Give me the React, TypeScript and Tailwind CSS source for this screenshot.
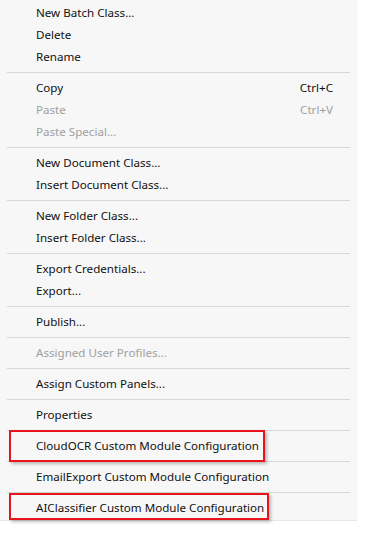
type Item = {
  label: string;
  shortcut?: string;
  disabled?: boolean;
  mark?: "ocr" | "ai";
};

const groups: Item[][] = [
  [{ label: "New Batch Class..." }, { label: "Delete" }, { label: "Rename" }],
  [
    { label: "Copy", shortcut: "Ctrl+C" },
    { label: "Paste", shortcut: "Ctrl+V", disabled: true },
    { label: "Paste Special...", disabled: true },
  ],
  [{ label: "New Document Class..." }, { label: "Insert Document Class..." }],
  [{ label: "New Folder Class..." }, { label: "Insert Folder Class..." }],
  [{ label: "Export Credentials..." }, { label: "Export..." }],
  [{ label: "Publish..." }],
  [{ label: "Assigned User Profiles...", disabled: true }],
  [{ label: "Assign Custom Panels..." }],
  [{ label: "Properties" }],
  [{ label: "CloudOCR Custom Module Configuration", mark: "ocr" }],
  [{ label: "EmailExport Custom Module Configuration" }],
  [{ label: "AIClassifier Custom Module Configuration", mark: "ai" }],
];

function MenuRow({ item }: { item: Item }) {
  return (
    <div
      className={`relative h-[22px] flex items-center pl-[36px] pr-[24px] ${
        item.disabled ? "text-[#a0a0a0]" : "text-[#111]"
      }`}
    >
      <span className="flex-1 leading-none pb-[1px]">{item.label}</span>
      {item.shortcut && <span className="leading-none pb-[1px]">{item.shortcut}</span>}
      {item.mark === "ocr" && (
        <div className="absolute left-[9px] top-[-5px] w-[256px] h-[32px] border-2 border-[#e8141c] shadow-[2px_2px_3px_rgba(0,0,0,0.25)]" />
      )}
      {item.mark === "ai" && (
        <div className="absolute left-[9px] top-[-4px] w-[260px] h-[27px] border-2 border-[#e8141c] shadow-[2px_2px_3px_rgba(0,0,0,0.25)]" />
      )}
    </div>
  );
}

export default function App() {
  return (
    <div className="w-[375px] h-[551px] bg-white">
      <div
        className="w-[357px] bg-[#f7f7f7] pt-[2px] pb-[1px] border-b border-[#e6e6e6] text-[11.6px]"
        style={{ fontFamily: '"Segoe UI", "Noto Sans", sans-serif' }}
      >
        {groups.map((group, gi) => (
          <div key={gi}>
            {gi > 0 && (
              <div className="py-[4px] pl-[7px] pr-[7px]">
                <div className="h-px bg-[#d7d7d7]" />
              </div>
            )}
            {group.map((item) => (
              <MenuRow key={item.label} item={item} />
            ))}
          </div>
        ))}
      </div>
    </div>
  );
}
